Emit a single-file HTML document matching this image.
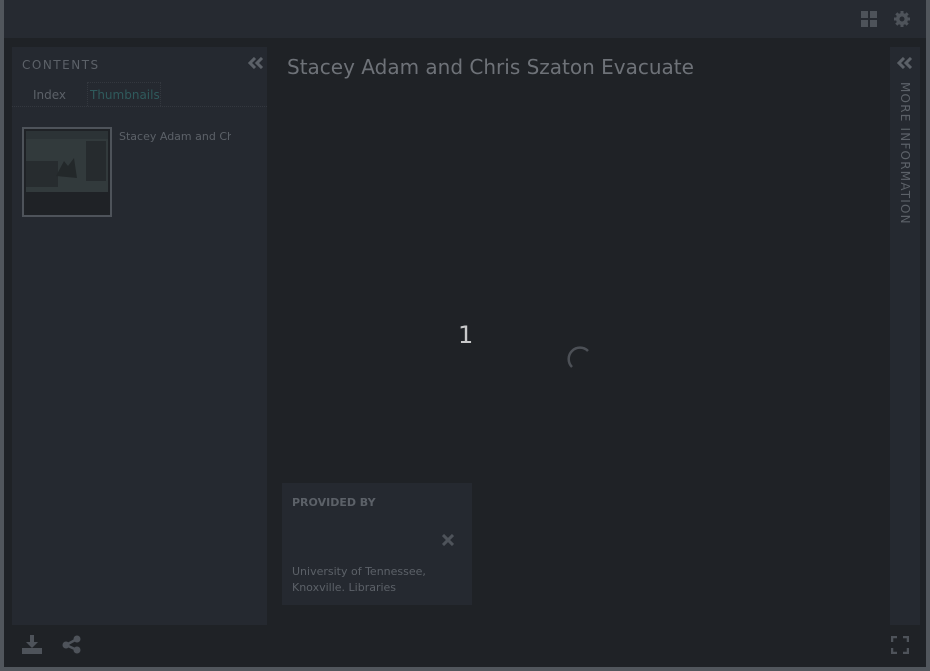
<!DOCTYPE html>
<html><head><meta charset="utf-8"><style>
*{margin:0;padding:0;box-sizing:border-box}
body{width:930px;height:671px;background:#51565c;position:relative;overflow:hidden;font-family:"DejaVu Sans","Liberation Sans",sans-serif}
.app{position:absolute;left:4px;top:0;width:922px;height:667px;background:#1f2226}
.top{position:absolute;left:0;top:0;width:922px;height:38px;background:#262a31}
.lp{position:absolute;left:8px;top:47px;width:255px;height:578px;background:#252930}
.rp{position:absolute;left:886px;top:47px;width:30px;height:578px;background:#252930}
.t{position:absolute;white-space:nowrap}
</style></head><body>
<div class="app">
<div class="top">
<svg style="position:absolute;left:857px;top:11px" width="16" height="16"><rect x="0" y="0" width="7" height="7" fill="#4e535a"/><rect x="9" y="0" width="7" height="7" fill="#4e535a"/><rect x="0" y="9" width="7" height="7" fill="#4e535a"/><rect x="9" y="9" width="7" height="7" fill="#4e535a"/></svg>
<svg style="position:absolute;left:889px;top:10px" width="18" height="18" viewBox="0 0 18 18"><g fill="#4e535a"><circle cx="9" cy="9" r="6"/><g stroke="#4e535a" stroke-width="3"><line x1="9" y1="1" x2="9" y2="17"/><line x1="1" y1="9" x2="17" y2="9"/><line x1="3.3" y1="3.3" x2="14.7" y2="14.7"/><line x1="14.7" y1="3.3" x2="3.3" y2="14.7"/></g></g><circle cx="9" cy="9" r="2.5" fill="#262a31"/></svg>
</div>
<div class="lp">
<div class="t" style="left:10px;top:11px;font-size:12px;letter-spacing:1.5px;color:#5c6168">CONTENTS</div>
<svg style="position:absolute;left:236px;top:10px" width="16" height="12"><path d="M7 1L2 6l5 5M14 1L9 6l5 5" stroke="#5c6168" stroke-width="3" fill="none"/></svg>
<div class="t" style="left:21px;top:41px;font-size:12px;color:#5c6168">Index</div>
<div style="position:absolute;left:75px;top:35px;width:74px;height:24px;border:1px dotted #34383f;border-bottom:none"></div>
<div class="t" style="left:78px;top:41px;font-size:12px;color:#2f5a5c">Thumbnails</div>
<div style="position:absolute;left:0;top:59px;width:255px;border-top:1px dotted #34383f"></div>
<div style="position:absolute;left:10px;top:80px;width:90px;height:90px;border:2px solid #4e535a;background:#1f2226"></div>
<div style="position:absolute;left:14px;top:84px;width:82px;height:61px;background:#323a3c"></div>
<svg style="position:absolute;left:14px;top:84px" width="82" height="61"><rect x="60" y="10" width="20" height="40" fill="#262b2e"/><rect x="0" y="30" width="32" height="26" fill="#272c2f"/><path d="M30 45l8-15 4 5 6-8 3 20z" fill="#23282a"/><rect x="0" y="0" width="82" height="8" fill="#2c3336"/></svg>
<div class="t" style="left:107px;top:83px;font-size:11px;color:#5c6168;width:112px;overflow:hidden">Stacey Adam and Chris</div>
</div>
<div class="t" style="left:283px;top:55px;font-size:20px;color:#6e7278">Stacey Adam and Chris Szaton Evacuate</div>
<div class="t" style="left:454px;top:321px;font-size:24px;color:#c8c9ca">1</div>
<svg style="position:absolute;left:561px;top:344px" width="28" height="28"><path d="M7 23 A10 10 0 1 1 23 7" fill="none" stroke="#4c5056" stroke-width="2.5"/></svg>
<div style="position:absolute;left:278px;top:483px;width:190px;height:122px;background:#252930">
<div class="t" style="left:10px;top:13px;font-size:11px;font-weight:bold;color:#5c6168">PROVIDED BY</div>
<svg style="position:absolute;left:160px;top:51px" width="12" height="12"><path d="M1 1l10 10M11 1L1 11" stroke="#4e535a" stroke-width="3"/></svg>
<div class="t" style="left:10px;top:81px;font-size:11px;line-height:16px;color:#5c6168">University of Tennessee,<br>Knoxville. Libraries</div>
</div>
<div class="rp">
<svg style="position:absolute;left:7px;top:10px" width="16" height="12"><path d="M7 1L2 6l5 5M14 1L9 6l5 5" stroke="#5c6168" stroke-width="3" fill="none"/></svg>
<div class="t" style="left:22px;top:35px;font-size:12px;letter-spacing:1.2px;color:#5c6168;transform:rotate(90deg);transform-origin:0 0">MORE INFORMATION</div>
</div>
<svg style="position:absolute;left:18px;top:635px" width="20" height="19"><path d="M8 0h4v7h4l-6 6-6-6h4z" fill="#4e535a"/><rect x="0" y="13" width="20" height="6" fill="#4e535a"/></svg>
<svg style="position:absolute;left:58px;top:635px" width="19" height="19"><g fill="#4e535a"><circle cx="15" cy="4" r="3.5"/><circle cx="4" cy="10" r="3.5"/><circle cx="15" cy="15" r="3.5"/></g><path d="M15 4L4 10L15 15" stroke="#4e535a" stroke-width="2.5" fill="none"/></svg>
<svg style="position:absolute;left:887px;top:636px" width="18" height="18"><path d="M1 6V1h5M12 1h5v5M17 12v5h-5M6 17H1v-5" stroke="#4e535a" stroke-width="2.5" fill="none"/></svg>
</div>
</body></html>
